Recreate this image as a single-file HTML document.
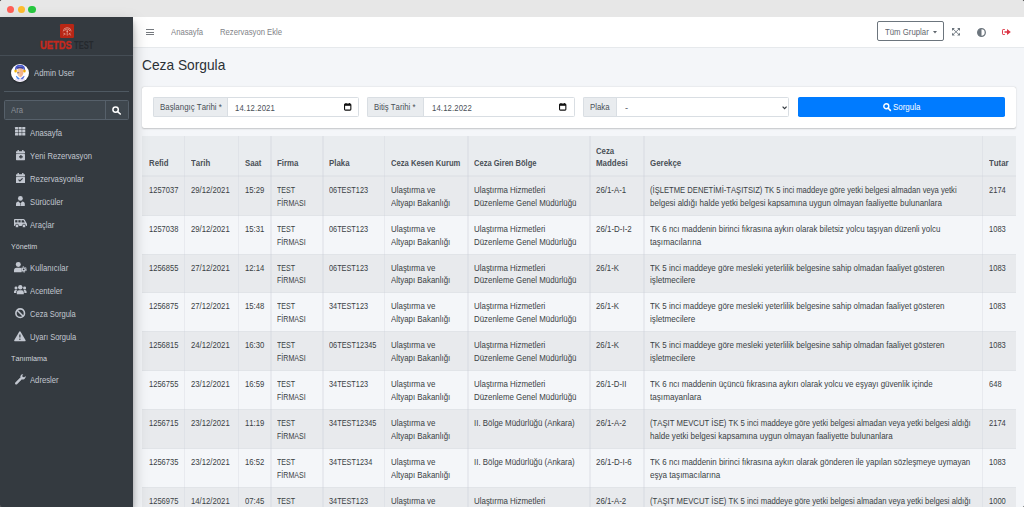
<!DOCTYPE html><html><head><meta charset="utf-8"><style>
*{margin:0;padding:0;box-sizing:border-box}
html,body{width:1024px;height:507px;overflow:hidden;background:#262626;font-family:"Liberation Sans", sans-serif}
.win{position:absolute;left:0;top:0;width:1024px;height:507px;overflow:hidden;background:#f4f6f9;border-radius:2.6px}
.ab{position:absolute}
.t{position:absolute;white-space:nowrap;transform-origin:0 0;font-kerning:none}
svg{position:absolute;overflow:visible}

</style></head><body><div class="win">
<div class="ab" style="left:0;top:0;width:1024px;height:17px;background:#e7e7e7"></div>
<div class="ab" style="left:7.050000000000001px;top:5.6px;width:7.2px;height:7.2px;border-radius:50%;background:#ff5f57"></div>
<div class="ab" style="left:17.7px;top:5.6px;width:7.2px;height:7.2px;border-radius:50%;background:#febc2e"></div>
<div class="ab" style="left:28.4px;top:5.6px;width:7.2px;height:7.2px;border-radius:50%;background:#28c840"></div>
<div class="ab" style="left:133px;top:17px;width:891px;height:490px;background:#f4f6f9"></div>
<div class="ab" style="left:133px;top:17px;width:891px;height:30.9px;background:#fff;border-bottom:0.6px solid #e6e9ec"></div>
<div class="ab" style="left:142.2px;top:136.2px;width:874.0px;height:39.70000000000002px;background:#e9ecef"></div>
<div class="ab" style="left:142.2px;top:175.90px;width:874.0px;height:38.86px;background:#e8eaed"></div>
<div class="ab" style="left:142.2px;top:175.90px;width:874.0px;height:0.6px;background:#e1e4e8"></div>
<div class="ab" style="left:142.2px;top:214.76px;width:874.0px;height:38.86px;background:#f4f6f9"></div>
<div class="ab" style="left:142.2px;top:214.76px;width:874.0px;height:0.6px;background:#e1e4e8"></div>
<div class="ab" style="left:142.2px;top:253.62px;width:874.0px;height:38.86px;background:#e8eaed"></div>
<div class="ab" style="left:142.2px;top:253.62px;width:874.0px;height:0.6px;background:#e1e4e8"></div>
<div class="ab" style="left:142.2px;top:292.48px;width:874.0px;height:38.86px;background:#f4f6f9"></div>
<div class="ab" style="left:142.2px;top:292.48px;width:874.0px;height:0.6px;background:#e1e4e8"></div>
<div class="ab" style="left:142.2px;top:331.34px;width:874.0px;height:38.86px;background:#e8eaed"></div>
<div class="ab" style="left:142.2px;top:331.34px;width:874.0px;height:0.6px;background:#e1e4e8"></div>
<div class="ab" style="left:142.2px;top:370.20px;width:874.0px;height:38.86px;background:#f4f6f9"></div>
<div class="ab" style="left:142.2px;top:370.20px;width:874.0px;height:0.6px;background:#e1e4e8"></div>
<div class="ab" style="left:142.2px;top:409.06px;width:874.0px;height:38.86px;background:#e8eaed"></div>
<div class="ab" style="left:142.2px;top:409.06px;width:874.0px;height:0.6px;background:#e1e4e8"></div>
<div class="ab" style="left:142.2px;top:447.92px;width:874.0px;height:38.86px;background:#f4f6f9"></div>
<div class="ab" style="left:142.2px;top:447.92px;width:874.0px;height:0.6px;background:#e1e4e8"></div>
<div class="ab" style="left:142.2px;top:486.78px;width:874.0px;height:38.86px;background:#e8eaed"></div>
<div class="ab" style="left:142.2px;top:486.78px;width:874.0px;height:0.6px;background:#e1e4e8"></div>
<div class="ab" style="left:142.2px;top:174.9px;width:874.0px;height:1px;background:#e2e5e9"></div>
<div class="ab" style="left:183.80px;top:136.2px;width:1.6px;height:370.8px;background:rgba(200,206,214,0.28)"></div>
<div class="ab" style="left:237.60px;top:136.2px;width:1.6px;height:370.8px;background:rgba(200,206,214,0.28)"></div>
<div class="ab" style="left:270.10px;top:136.2px;width:1.6px;height:370.8px;background:rgba(200,206,214,0.28)"></div>
<div class="ab" style="left:322.00px;top:136.2px;width:1.6px;height:370.8px;background:rgba(200,206,214,0.28)"></div>
<div class="ab" style="left:383.50px;top:136.2px;width:1.6px;height:370.8px;background:rgba(200,206,214,0.28)"></div>
<div class="ab" style="left:467.00px;top:136.2px;width:1.6px;height:370.8px;background:rgba(200,206,214,0.28)"></div>
<div class="ab" style="left:589.20px;top:136.2px;width:1.6px;height:370.8px;background:rgba(200,206,214,0.28)"></div>
<div class="ab" style="left:643.40px;top:136.2px;width:1.6px;height:370.8px;background:rgba(200,206,214,0.28)"></div>
<div class="ab" style="left:981.60px;top:136.2px;width:1.6px;height:370.8px;background:rgba(200,206,214,0.28)"></div>
<div class="t" style="left:148.70px;top:157.38px;font-size:9.0px;line-height:12.8px;color:#495057;font-weight:bold;transform:scaleX(0.8672)">Refid</div>
<div class="t" style="left:190.80px;top:157.38px;font-size:9.0px;line-height:12.8px;color:#495057;font-weight:bold;transform:scaleX(0.8724)">Tarih</div>
<div class="t" style="left:244.60px;top:157.38px;font-size:9.0px;line-height:12.8px;color:#495057;font-weight:bold;transform:scaleX(0.8637)">Saat</div>
<div class="t" style="left:277.10px;top:157.38px;font-size:9.0px;line-height:12.8px;color:#495057;font-weight:bold;transform:scaleX(0.8758)">Firma</div>
<div class="t" style="left:329.00px;top:157.38px;font-size:9.0px;line-height:12.8px;color:#495057;font-weight:bold;transform:scaleX(0.8717)">Plaka</div>
<div class="t" style="left:390.50px;top:157.38px;font-size:9.0px;line-height:12.8px;color:#495057;font-weight:bold;transform:scaleX(0.8459)">Ceza Kesen Kurum</div>
<div class="t" style="left:474.00px;top:157.38px;font-size:9.0px;line-height:12.8px;color:#495057;font-weight:bold;transform:scaleX(0.8390)">Ceza Giren Bölge</div>
<div class="t" style="left:596.20px;top:144.58px;font-size:9.0px;line-height:12.8px;color:#495057;font-weight:bold;transform:scaleX(0.8645)">Ceza</div>
<div class="t" style="left:596.20px;top:157.38px;font-size:9.0px;line-height:12.8px;color:#495057;font-weight:bold;transform:scaleX(0.8779)">Maddesi</div>
<div class="t" style="left:650.40px;top:157.38px;font-size:9.0px;line-height:12.8px;color:#495057;font-weight:bold;transform:scaleX(0.8794)">Gerekçe</div>
<div class="t" style="left:988.60px;top:157.38px;font-size:9.0px;line-height:12.8px;color:#495057;font-weight:bold;transform:scaleX(0.8731)">Tutar</div>
<div class="t" style="left:148.70px;top:183.88px;font-size:9.0px;line-height:12.8px;color:#3a3f44;transform:scaleX(0.8372)">1257037</div>
<div class="t" style="left:190.80px;top:183.88px;font-size:9.0px;line-height:12.8px;color:#3a3f44;transform:scaleX(0.8587)">29/12/2021</div>
<div class="t" style="left:244.60px;top:183.88px;font-size:9.0px;line-height:12.8px;color:#3a3f44;transform:scaleX(0.8587)">15:29</div>
<div class="t" style="left:277.10px;top:183.88px;font-size:9.0px;line-height:12.8px;color:#3a3f44;transform:scaleX(0.7870)">TEST</div>
<div class="t" style="left:277.10px;top:196.68px;font-size:9.0px;line-height:12.8px;color:#3a3f44;transform:scaleX(0.7870)">FİRMASI</div>
<div class="t" style="left:329.00px;top:183.88px;font-size:9.0px;line-height:12.8px;color:#3a3f44;transform:scaleX(0.8132)">06TEST123</div>
<div class="t" style="left:390.50px;top:183.88px;font-size:9.0px;line-height:12.8px;color:#3a3f44;transform:scaleX(0.8797)">Ulaştırma ve</div>
<div class="t" style="left:390.50px;top:196.68px;font-size:9.0px;line-height:12.8px;color:#3a3f44;transform:scaleX(0.8766)">Altyapı Bakanlığı</div>
<div class="t" style="left:474.00px;top:183.88px;font-size:9.0px;line-height:12.8px;color:#3a3f44;transform:scaleX(0.8800)">Ulaştırma Hizmetleri</div>
<div class="t" style="left:474.00px;top:196.68px;font-size:9.0px;line-height:12.8px;color:#3a3f44;transform:scaleX(0.8752)">Düzenleme Genel Müdürlüğü</div>
<div class="t" style="left:596.20px;top:183.88px;font-size:9.0px;line-height:12.8px;color:#3a3f44;transform:scaleX(0.8761)">26/1-A-1</div>
<div class="t" style="left:650.40px;top:183.88px;font-size:9.0px;line-height:12.8px;color:#3a3f44;transform:scaleX(0.8478)">(İŞLETME DENETİMİ-TAŞITSIZ) TK 5 inci maddeye göre yetki belgesi almadan veya yetki</div>
<div class="t" style="left:650.40px;top:196.68px;font-size:9.0px;line-height:12.8px;color:#3a3f44;transform:scaleX(0.8908)">belgesi aldığı halde yetki belgesi kapsamına uygun olmayan faaliyette bulunanlara</div>
<div class="t" style="left:988.60px;top:183.88px;font-size:9.0px;line-height:12.8px;color:#3a3f44;transform:scaleX(0.8372)">2174</div>
<div class="t" style="left:148.70px;top:222.74px;font-size:9.0px;line-height:12.8px;color:#3a3f44;transform:scaleX(0.8372)">1257038</div>
<div class="t" style="left:190.80px;top:222.74px;font-size:9.0px;line-height:12.8px;color:#3a3f44;transform:scaleX(0.8587)">29/12/2021</div>
<div class="t" style="left:244.60px;top:222.74px;font-size:9.0px;line-height:12.8px;color:#3a3f44;transform:scaleX(0.8587)">15:31</div>
<div class="t" style="left:277.10px;top:222.74px;font-size:9.0px;line-height:12.8px;color:#3a3f44;transform:scaleX(0.7870)">TEST</div>
<div class="t" style="left:277.10px;top:235.54px;font-size:9.0px;line-height:12.8px;color:#3a3f44;transform:scaleX(0.7870)">FİRMASI</div>
<div class="t" style="left:329.00px;top:222.74px;font-size:9.0px;line-height:12.8px;color:#3a3f44;transform:scaleX(0.8132)">06TEST123</div>
<div class="t" style="left:390.50px;top:222.74px;font-size:9.0px;line-height:12.8px;color:#3a3f44;transform:scaleX(0.8797)">Ulaştırma ve</div>
<div class="t" style="left:390.50px;top:235.54px;font-size:9.0px;line-height:12.8px;color:#3a3f44;transform:scaleX(0.8766)">Altyapı Bakanlığı</div>
<div class="t" style="left:474.00px;top:222.74px;font-size:9.0px;line-height:12.8px;color:#3a3f44;transform:scaleX(0.8800)">Ulaştırma Hizmetleri</div>
<div class="t" style="left:474.00px;top:235.54px;font-size:9.0px;line-height:12.8px;color:#3a3f44;transform:scaleX(0.8752)">Düzenleme Genel Müdürlüğü</div>
<div class="t" style="left:596.20px;top:222.74px;font-size:9.0px;line-height:12.8px;color:#3a3f44;transform:scaleX(0.8809)">26/1-D-I-2</div>
<div class="t" style="left:650.40px;top:222.74px;font-size:9.0px;line-height:12.8px;color:#3a3f44;transform:scaleX(0.8807)">TK 6 ncı maddenin birinci fıkrasına aykırı olarak biletsiz yolcu taşıyan düzenli yolcu</div>
<div class="t" style="left:650.40px;top:235.54px;font-size:9.0px;line-height:12.8px;color:#3a3f44;transform:scaleX(0.9058)">taşımacılarına</div>
<div class="t" style="left:988.60px;top:222.74px;font-size:9.0px;line-height:12.8px;color:#3a3f44;transform:scaleX(0.8372)">1083</div>
<div class="t" style="left:148.70px;top:261.60px;font-size:9.0px;line-height:12.8px;color:#3a3f44;transform:scaleX(0.8372)">1256855</div>
<div class="t" style="left:190.80px;top:261.60px;font-size:9.0px;line-height:12.8px;color:#3a3f44;transform:scaleX(0.8587)">27/12/2021</div>
<div class="t" style="left:244.60px;top:261.60px;font-size:9.0px;line-height:12.8px;color:#3a3f44;transform:scaleX(0.8587)">12:14</div>
<div class="t" style="left:277.10px;top:261.60px;font-size:9.0px;line-height:12.8px;color:#3a3f44;transform:scaleX(0.7870)">TEST</div>
<div class="t" style="left:277.10px;top:274.40px;font-size:9.0px;line-height:12.8px;color:#3a3f44;transform:scaleX(0.7870)">FİRMASI</div>
<div class="t" style="left:329.00px;top:261.60px;font-size:9.0px;line-height:12.8px;color:#3a3f44;transform:scaleX(0.8132)">06TEST123</div>
<div class="t" style="left:390.50px;top:261.60px;font-size:9.0px;line-height:12.8px;color:#3a3f44;transform:scaleX(0.8797)">Ulaştırma ve</div>
<div class="t" style="left:390.50px;top:274.40px;font-size:9.0px;line-height:12.8px;color:#3a3f44;transform:scaleX(0.8766)">Altyapı Bakanlığı</div>
<div class="t" style="left:474.00px;top:261.60px;font-size:9.0px;line-height:12.8px;color:#3a3f44;transform:scaleX(0.8800)">Ulaştırma Hizmetleri</div>
<div class="t" style="left:474.00px;top:274.40px;font-size:9.0px;line-height:12.8px;color:#3a3f44;transform:scaleX(0.8752)">Düzenleme Genel Müdürlüğü</div>
<div class="t" style="left:596.20px;top:261.60px;font-size:9.0px;line-height:12.8px;color:#3a3f44;transform:scaleX(0.8660)">26/1-K</div>
<div class="t" style="left:650.40px;top:261.60px;font-size:9.0px;line-height:12.8px;color:#3a3f44;transform:scaleX(0.8827)">TK 5 inci maddeye göre mesleki yeterlilik belgesine sahip olmadan faaliyet gösteren</div>
<div class="t" style="left:650.40px;top:274.40px;font-size:9.0px;line-height:12.8px;color:#3a3f44;transform:scaleX(0.9058)">işletmecilere</div>
<div class="t" style="left:988.60px;top:261.60px;font-size:9.0px;line-height:12.8px;color:#3a3f44;transform:scaleX(0.8372)">1083</div>
<div class="t" style="left:148.70px;top:300.46px;font-size:9.0px;line-height:12.8px;color:#3a3f44;transform:scaleX(0.8372)">1256875</div>
<div class="t" style="left:190.80px;top:300.46px;font-size:9.0px;line-height:12.8px;color:#3a3f44;transform:scaleX(0.8587)">27/12/2021</div>
<div class="t" style="left:244.60px;top:300.46px;font-size:9.0px;line-height:12.8px;color:#3a3f44;transform:scaleX(0.8587)">15:48</div>
<div class="t" style="left:277.10px;top:300.46px;font-size:9.0px;line-height:12.8px;color:#3a3f44;transform:scaleX(0.7870)">TEST</div>
<div class="t" style="left:277.10px;top:313.26px;font-size:9.0px;line-height:12.8px;color:#3a3f44;transform:scaleX(0.7870)">FİRMASI</div>
<div class="t" style="left:329.00px;top:300.46px;font-size:9.0px;line-height:12.8px;color:#3a3f44;transform:scaleX(0.8132)">34TEST123</div>
<div class="t" style="left:390.50px;top:300.46px;font-size:9.0px;line-height:12.8px;color:#3a3f44;transform:scaleX(0.8797)">Ulaştırma ve</div>
<div class="t" style="left:390.50px;top:313.26px;font-size:9.0px;line-height:12.8px;color:#3a3f44;transform:scaleX(0.8766)">Altyapı Bakanlığı</div>
<div class="t" style="left:474.00px;top:300.46px;font-size:9.0px;line-height:12.8px;color:#3a3f44;transform:scaleX(0.8800)">Ulaştırma Hizmetleri</div>
<div class="t" style="left:474.00px;top:313.26px;font-size:9.0px;line-height:12.8px;color:#3a3f44;transform:scaleX(0.8752)">Düzenleme Genel Müdürlüğü</div>
<div class="t" style="left:596.20px;top:300.46px;font-size:9.0px;line-height:12.8px;color:#3a3f44;transform:scaleX(0.8660)">26/1-K</div>
<div class="t" style="left:650.40px;top:300.46px;font-size:9.0px;line-height:12.8px;color:#3a3f44;transform:scaleX(0.8827)">TK 5 inci maddeye göre mesleki yeterlilik belgesine sahip olmadan faaliyet gösteren</div>
<div class="t" style="left:650.40px;top:313.26px;font-size:9.0px;line-height:12.8px;color:#3a3f44;transform:scaleX(0.9058)">işletmecilere</div>
<div class="t" style="left:988.60px;top:300.46px;font-size:9.0px;line-height:12.8px;color:#3a3f44;transform:scaleX(0.8372)">1083</div>
<div class="t" style="left:148.70px;top:339.32px;font-size:9.0px;line-height:12.8px;color:#3a3f44;transform:scaleX(0.8372)">1256815</div>
<div class="t" style="left:190.80px;top:339.32px;font-size:9.0px;line-height:12.8px;color:#3a3f44;transform:scaleX(0.8587)">24/12/2021</div>
<div class="t" style="left:244.60px;top:339.32px;font-size:9.0px;line-height:12.8px;color:#3a3f44;transform:scaleX(0.8587)">16:30</div>
<div class="t" style="left:277.10px;top:339.32px;font-size:9.0px;line-height:12.8px;color:#3a3f44;transform:scaleX(0.7870)">TEST</div>
<div class="t" style="left:277.10px;top:352.12px;font-size:9.0px;line-height:12.8px;color:#3a3f44;transform:scaleX(0.7870)">FİRMASI</div>
<div class="t" style="left:329.00px;top:339.32px;font-size:9.0px;line-height:12.8px;color:#3a3f44;transform:scaleX(0.8173)">06TEST12345</div>
<div class="t" style="left:390.50px;top:339.32px;font-size:9.0px;line-height:12.8px;color:#3a3f44;transform:scaleX(0.8797)">Ulaştırma ve</div>
<div class="t" style="left:390.50px;top:352.12px;font-size:9.0px;line-height:12.8px;color:#3a3f44;transform:scaleX(0.8766)">Altyapı Bakanlığı</div>
<div class="t" style="left:474.00px;top:339.32px;font-size:9.0px;line-height:12.8px;color:#3a3f44;transform:scaleX(0.8800)">Ulaştırma Hizmetleri</div>
<div class="t" style="left:474.00px;top:352.12px;font-size:9.0px;line-height:12.8px;color:#3a3f44;transform:scaleX(0.8752)">Düzenleme Genel Müdürlüğü</div>
<div class="t" style="left:596.20px;top:339.32px;font-size:9.0px;line-height:12.8px;color:#3a3f44;transform:scaleX(0.8660)">26/1-K</div>
<div class="t" style="left:650.40px;top:339.32px;font-size:9.0px;line-height:12.8px;color:#3a3f44;transform:scaleX(0.8827)">TK 5 inci maddeye göre mesleki yeterlilik belgesine sahip olmadan faaliyet gösteren</div>
<div class="t" style="left:650.40px;top:352.12px;font-size:9.0px;line-height:12.8px;color:#3a3f44;transform:scaleX(0.9058)">işletmecilere</div>
<div class="t" style="left:988.60px;top:339.32px;font-size:9.0px;line-height:12.8px;color:#3a3f44;transform:scaleX(0.8372)">1083</div>
<div class="t" style="left:148.70px;top:378.18px;font-size:9.0px;line-height:12.8px;color:#3a3f44;transform:scaleX(0.8372)">1256755</div>
<div class="t" style="left:190.80px;top:378.18px;font-size:9.0px;line-height:12.8px;color:#3a3f44;transform:scaleX(0.8587)">23/12/2021</div>
<div class="t" style="left:244.60px;top:378.18px;font-size:9.0px;line-height:12.8px;color:#3a3f44;transform:scaleX(0.8587)">16:59</div>
<div class="t" style="left:277.10px;top:378.18px;font-size:9.0px;line-height:12.8px;color:#3a3f44;transform:scaleX(0.7870)">TEST</div>
<div class="t" style="left:277.10px;top:390.98px;font-size:9.0px;line-height:12.8px;color:#3a3f44;transform:scaleX(0.7870)">FİRMASI</div>
<div class="t" style="left:329.00px;top:378.18px;font-size:9.0px;line-height:12.8px;color:#3a3f44;transform:scaleX(0.8132)">34TEST123</div>
<div class="t" style="left:390.50px;top:378.18px;font-size:9.0px;line-height:12.8px;color:#3a3f44;transform:scaleX(0.8797)">Ulaştırma ve</div>
<div class="t" style="left:390.50px;top:390.98px;font-size:9.0px;line-height:12.8px;color:#3a3f44;transform:scaleX(0.8766)">Altyapı Bakanlığı</div>
<div class="t" style="left:474.00px;top:378.18px;font-size:9.0px;line-height:12.8px;color:#3a3f44;transform:scaleX(0.8800)">Ulaştırma Hizmetleri</div>
<div class="t" style="left:474.00px;top:390.98px;font-size:9.0px;line-height:12.8px;color:#3a3f44;transform:scaleX(0.8752)">Düzenleme Genel Müdürlüğü</div>
<div class="t" style="left:596.20px;top:378.18px;font-size:9.0px;line-height:12.8px;color:#3a3f44;transform:scaleX(0.8677)">26/1-D-II</div>
<div class="t" style="left:650.40px;top:378.18px;font-size:9.0px;line-height:12.8px;color:#3a3f44;transform:scaleX(0.8801)">TK 6 ncı maddenin üçüncü fıkrasına aykırı olarak yolcu ve eşyayı güvenlik içinde</div>
<div class="t" style="left:650.40px;top:390.98px;font-size:9.0px;line-height:12.8px;color:#3a3f44;transform:scaleX(0.9058)">taşımayanlara</div>
<div class="t" style="left:988.60px;top:378.18px;font-size:9.0px;line-height:12.8px;color:#3a3f44;transform:scaleX(0.8372)">648</div>
<div class="t" style="left:148.70px;top:417.04px;font-size:9.0px;line-height:12.8px;color:#3a3f44;transform:scaleX(0.8372)">1256715</div>
<div class="t" style="left:190.80px;top:417.04px;font-size:9.0px;line-height:12.8px;color:#3a3f44;transform:scaleX(0.8587)">23/12/2021</div>
<div class="t" style="left:244.60px;top:417.04px;font-size:9.0px;line-height:12.8px;color:#3a3f44;transform:scaleX(0.8587)">11:19</div>
<div class="t" style="left:277.10px;top:417.04px;font-size:9.0px;line-height:12.8px;color:#3a3f44;transform:scaleX(0.7870)">TEST</div>
<div class="t" style="left:277.10px;top:429.84px;font-size:9.0px;line-height:12.8px;color:#3a3f44;transform:scaleX(0.7870)">FİRMASI</div>
<div class="t" style="left:329.00px;top:417.04px;font-size:9.0px;line-height:12.8px;color:#3a3f44;transform:scaleX(0.8173)">34TEST12345</div>
<div class="t" style="left:390.50px;top:417.04px;font-size:9.0px;line-height:12.8px;color:#3a3f44;transform:scaleX(0.8797)">Ulaştırma ve</div>
<div class="t" style="left:390.50px;top:429.84px;font-size:9.0px;line-height:12.8px;color:#3a3f44;transform:scaleX(0.8766)">Altyapı Bakanlığı</div>
<div class="t" style="left:474.00px;top:417.04px;font-size:9.0px;line-height:12.8px;color:#3a3f44;transform:scaleX(0.8755)">II. Bölge Müdürlüğü (Ankara)</div>
<div class="t" style="left:596.20px;top:417.04px;font-size:9.0px;line-height:12.8px;color:#3a3f44;transform:scaleX(0.8761)">26/1-A-2</div>
<div class="t" style="left:650.40px;top:417.04px;font-size:9.0px;line-height:12.8px;color:#3a3f44;transform:scaleX(0.8580)">(TAŞIT MEVCUT İSE) TK 5 inci maddeye göre yetki belgesi almadan veya yetki belgesi aldığı</div>
<div class="t" style="left:650.40px;top:429.84px;font-size:9.0px;line-height:12.8px;color:#3a3f44;transform:scaleX(0.8918)">halde yetki belgesi kapsamına uygun olmayan faaliyette bulunanlara</div>
<div class="t" style="left:988.60px;top:417.04px;font-size:9.0px;line-height:12.8px;color:#3a3f44;transform:scaleX(0.8372)">2174</div>
<div class="t" style="left:148.70px;top:455.90px;font-size:9.0px;line-height:12.8px;color:#3a3f44;transform:scaleX(0.8372)">1256735</div>
<div class="t" style="left:190.80px;top:455.90px;font-size:9.0px;line-height:12.8px;color:#3a3f44;transform:scaleX(0.8587)">23/12/2021</div>
<div class="t" style="left:244.60px;top:455.90px;font-size:9.0px;line-height:12.8px;color:#3a3f44;transform:scaleX(0.8587)">16:52</div>
<div class="t" style="left:277.10px;top:455.90px;font-size:9.0px;line-height:12.8px;color:#3a3f44;transform:scaleX(0.7870)">TEST</div>
<div class="t" style="left:277.10px;top:468.70px;font-size:9.0px;line-height:12.8px;color:#3a3f44;transform:scaleX(0.7870)">FİRMASI</div>
<div class="t" style="left:329.00px;top:455.90px;font-size:9.0px;line-height:12.8px;color:#3a3f44;transform:scaleX(0.8154)">34TEST1234</div>
<div class="t" style="left:390.50px;top:455.90px;font-size:9.0px;line-height:12.8px;color:#3a3f44;transform:scaleX(0.8797)">Ulaştırma ve</div>
<div class="t" style="left:390.50px;top:468.70px;font-size:9.0px;line-height:12.8px;color:#3a3f44;transform:scaleX(0.8766)">Altyapı Bakanlığı</div>
<div class="t" style="left:474.00px;top:455.90px;font-size:9.0px;line-height:12.8px;color:#3a3f44;transform:scaleX(0.8755)">II. Bölge Müdürlüğü (Ankara)</div>
<div class="t" style="left:596.20px;top:455.90px;font-size:9.0px;line-height:12.8px;color:#3a3f44;transform:scaleX(0.8809)">26/1-D-I-6</div>
<div class="t" style="left:650.40px;top:455.90px;font-size:9.0px;line-height:12.8px;color:#3a3f44;transform:scaleX(0.8830)">TK 6 ncı maddenin birinci fıkrasına aykırı olarak gönderen ile yapılan sözleşmeye uymayan</div>
<div class="t" style="left:650.40px;top:468.70px;font-size:9.0px;line-height:12.8px;color:#3a3f44;transform:scaleX(0.8988)">eşya taşımacılarına</div>
<div class="t" style="left:988.60px;top:455.90px;font-size:9.0px;line-height:12.8px;color:#3a3f44;transform:scaleX(0.8372)">1083</div>
<div class="t" style="left:148.70px;top:494.76px;font-size:9.0px;line-height:12.8px;color:#3a3f44;transform:scaleX(0.8372)">1256975</div>
<div class="t" style="left:190.80px;top:494.76px;font-size:9.0px;line-height:12.8px;color:#3a3f44;transform:scaleX(0.8587)">14/12/2021</div>
<div class="t" style="left:244.60px;top:494.76px;font-size:9.0px;line-height:12.8px;color:#3a3f44;transform:scaleX(0.8587)">07:45</div>
<div class="t" style="left:277.10px;top:494.76px;font-size:9.0px;line-height:12.8px;color:#3a3f44;transform:scaleX(0.7870)">TEST</div>
<div class="t" style="left:277.10px;top:507.56px;font-size:9.0px;line-height:12.8px;color:#3a3f44;transform:scaleX(0.7870)">FİRMASI</div>
<div class="t" style="left:329.00px;top:494.76px;font-size:9.0px;line-height:12.8px;color:#3a3f44;transform:scaleX(0.8132)">34TEST123</div>
<div class="t" style="left:390.50px;top:494.76px;font-size:9.0px;line-height:12.8px;color:#3a3f44;transform:scaleX(0.8797)">Ulaştırma ve</div>
<div class="t" style="left:390.50px;top:507.56px;font-size:9.0px;line-height:12.8px;color:#3a3f44;transform:scaleX(0.8766)">Altyapı Bakanlığı</div>
<div class="t" style="left:474.00px;top:494.76px;font-size:9.0px;line-height:12.8px;color:#3a3f44;transform:scaleX(0.8800)">Ulaştırma Hizmetleri</div>
<div class="t" style="left:474.00px;top:507.56px;font-size:9.0px;line-height:12.8px;color:#3a3f44;transform:scaleX(0.8752)">Düzenleme Genel Müdürlüğü</div>
<div class="t" style="left:596.20px;top:494.76px;font-size:9.0px;line-height:12.8px;color:#3a3f44;transform:scaleX(0.8761)">26/1-A-2</div>
<div class="t" style="left:650.40px;top:494.76px;font-size:9.0px;line-height:12.8px;color:#3a3f44;transform:scaleX(0.8580)">(TAŞIT MEVCUT İSE) TK 5 inci maddeye göre yetki belgesi almadan veya yetki belgesi aldığı</div>
<div class="t" style="left:650.40px;top:507.56px;font-size:9.0px;line-height:12.8px;color:#3a3f44;transform:scaleX(0.8918)">halde yetki belgesi kapsamına uygun olmayan faaliyette bulunanlara</div>
<div class="t" style="left:988.60px;top:494.76px;font-size:9.0px;line-height:12.8px;color:#3a3f44;transform:scaleX(0.8372)">1000</div>
<div class="ab" style="left:0;top:17px;width:133.3px;height:490px;background:#343a40;box-shadow:0 7px 15px rgba(0,0,0,.25),0 5px 5px rgba(0,0,0,.22)"></div>
<div class="ab" style="left:60px;top:24px;width:14px;height:14px;background:#b82615;border-radius:1.2px"></div>
<svg style="left:60px;top:23px" width="14" height="14" viewBox="0 0 14 14"><g fill="none" stroke="#e3a094" stroke-width="0.8"><path d="M3.2 8.4 Q3.6 4.6 7.2 4.6 Q10.8 4.6 11.2 8.4"/><path d="M4.6 8 Q5 6 7.2 6 Q9.4 6 9.8 8"/><path d="M3.4 9.8 L5.2 11.6 M10.4 9.8 L8.8 11.6 M7.2 9.2 V12.6 M5 10.2 L3.6 12.4 M9.4 10.2 L10.6 12.4"/></g><path d="M7.2 7 L8.2 8.2 L7.2 9.4 L6.2 8.2 Z" fill="#e9a79c"/></svg>
<div class="t" style="left:40.00px;top:40.57px;font-size:10.2px;line-height:10px;color:#c6281c;font-weight:bold;transform:scaleX(0.9200);-webkit-text-stroke:0.35px #c6281c">UETDS</div>
<div class="t" style="left:74.40px;top:40.57px;font-size:10.2px;line-height:10px;color:#25292e;font-weight:bold;transform:scaleX(0.7500)">TEST</div>
<div class="ab" style="left:0;top:54.8px;width:133.3px;height:0.8px;background:#454d55"></div>
<div class="ab" style="left:11px;top:64px;width:18px;height:18px;border-radius:50%;background:#fff;box-shadow:0 1px 2px rgba(0,0,0,.4)"></div>
<svg style="left:11px;top:64px" width="18" height="18" viewBox="0 0 18 18"><defs><clipPath id="av"><circle cx="9" cy="9" r="8.6"/></clipPath></defs><g clip-path="url(#av)"><path d="M4.2 15 Q9 12.5 13.8 15 L14 18 H4 Z" fill="#e6e0f5"/><path d="M6.2 9.5 Q6 3.2 9 3 Q12.3 3.2 12.2 9.5 Q11.6 12.6 9.2 13.2 Q6.8 12.6 6.2 9.5 Z" fill="#f7c8a2"/><path d="M9 3 Q12.3 3.2 12.2 9.5 Q11.6 12.6 9.2 13.2 Z" fill="#f3b48e"/><path d="M3.8 7 Q3.6 0.6 9 0.6 Q14.4 0.6 14.3 7 L12.6 6.6 Q12.6 2.6 9 2.6 Q5.4 2.6 5.4 6.6 Z" fill="#4a5bd0"/><path d="M5.6 3.4 Q9 1.4 12.4 3.4 L12 5 Q9 3.4 6 5 Z" fill="#3b3f9a"/><ellipse cx="4.6" cy="6.9" rx="1.3" ry="1.5" fill="#f5b800"/><ellipse cx="13.4" cy="6.9" rx="1.3" ry="1.5" fill="#f5a800"/><rect x="6" y="8.2" width="2.4" height="1.1" rx="0.5" fill="#6b6f8a"/><path d="M5.3 11.8 L8.6 14.4 L7.4 15.4 Q5.4 14.6 5 12.6 Z" fill="#4d8ef0"/><path d="M13.1 11.8 L9.8 14.4 L11 15.4 Q13 14.6 13.4 12.6 Z" fill="#5a6fe0"/></g></svg>
<div class="t" style="left:34.30px;top:67.28px;font-size:9.0px;line-height:12.8px;color:#c2c7d0;transform:scaleX(0.8626)">Admin User</div>
<div class="ab" style="left:4px;top:90.6px;width:125px;height:0.6px;background:#4f5962"></div>
<div class="ab" style="left:4px;top:100px;width:125px;height:20px;background:#3f474e;border:0.6px solid #56606a;border-radius:1.5px"></div>
<div class="ab" style="left:104.6px;top:100px;width:0.6px;height:20px;background:#56606a"></div>
<div class="t" style="left:11.00px;top:104.18px;font-size:9.0px;line-height:12.8px;color:#8a9097;transform:scaleX(0.8549)">Ara</div>
<svg style="left:112px;top:106px" width="10" height="8" viewBox="0 0 10 8"><circle cx="3.6" cy="3.6" r="2.7" fill="none" stroke="#fff" stroke-width="1.5"/><path d="M5.6 5.6 L8.3 8" stroke="#fff" stroke-width="1.6" stroke-linecap="round"/></svg>
<svg style="left:14.8px;top:127.4px" width="10.5" height="8.7" viewBox="0 0 10.5 8.7"><rect x="0.0" y="0.0" width="3.1" height="2.6" rx="0.5" fill="#c2c7d0"/><rect x="0.0" y="3.0" width="3.1" height="2.6" rx="0.5" fill="#c2c7d0"/><rect x="0.0" y="6.0" width="3.1" height="2.6" rx="0.5" fill="#c2c7d0"/><rect x="3.6" y="0.0" width="3.1" height="2.6" rx="0.5" fill="#c2c7d0"/><rect x="3.6" y="3.0" width="3.1" height="2.6" rx="0.5" fill="#c2c7d0"/><rect x="3.6" y="6.0" width="3.1" height="2.6" rx="0.5" fill="#c2c7d0"/><rect x="7.2" y="0.0" width="3.1" height="2.6" rx="0.5" fill="#c2c7d0"/><rect x="7.2" y="3.0" width="3.1" height="2.6" rx="0.5" fill="#c2c7d0"/><rect x="7.2" y="6.0" width="3.1" height="2.6" rx="0.5" fill="#c2c7d0"/></svg>
<div class="t" style="left:30.30px;top:126.78px;font-size:9.0px;line-height:12.8px;color:#c2c7d0;transform:scaleX(0.8557)">Anasayfa</div>
<svg style="left:15.6px;top:149.7px" width="9" height="10.2" viewBox="0 0 9 10.2"><rect x="1.5" y="0" width="1.4" height="2" fill="#c2c7d0"/><rect x="6.1" y="0" width="1.4" height="2" fill="#c2c7d0"/><rect x="0" y="1.2" width="9" height="2.2" rx="0.6" fill="#c2c7d0"/><rect x="0" y="3.9" width="9" height="6.3" rx="0.6" fill="#c2c7d0"/><path d="M4.9 5.0 V8.6 M3.0 6.8 H6.8" stroke="#343a40" stroke-width="1.25"/></svg>
<div class="t" style="left:30.30px;top:149.83px;font-size:9.0px;line-height:12.8px;color:#c2c7d0;transform:scaleX(0.8472)">Yeni Rezervasyon</div>
<svg style="left:15.8px;top:172.5px" width="9" height="10" viewBox="0 0 9 10"><rect x="1.5" y="0" width="1.4" height="2" fill="#c2c7d0"/><rect x="6.1" y="0" width="1.4" height="2" fill="#c2c7d0"/><rect x="0" y="1.2" width="9" height="2.2" rx="0.6" fill="#c2c7d0"/><rect x="0" y="3.9" width="9" height="6.1" rx="0.6" fill="#c2c7d0"/><path d="M2.5 6.6 L3.9 8 L6.6 5.3" fill="none" stroke="#343a40" stroke-width="1.1"/></svg>
<div class="t" style="left:30.30px;top:172.88px;font-size:9.0px;line-height:12.8px;color:#c2c7d0;transform:scaleX(0.8622)">Rezervasyonlar</div>
<svg style="left:15.8px;top:196px" width="8.8" height="10" viewBox="0 0 8.8 10"><circle cx="4.4" cy="2.4" r="2.4" fill="#c2c7d0"/><path d="M0 10 V8 Q0 5.4 2.6 5.4 L4.4 7.6 L6.2 5.4 Q8.8 5.4 8.8 8 V10 Z" fill="#c2c7d0"/><path d="M4.4 6.2 L4 9.5 L4.8 9.5 Z" fill="#343a40"/></svg>
<div class="t" style="left:30.30px;top:195.93px;font-size:9.0px;line-height:12.8px;color:#c2c7d0;transform:scaleX(0.8562)">Sürücüler</div>
<svg style="left:13.6px;top:219.3px" width="13" height="8.8" viewBox="0 0 13 8.8"><path d="M0.8 0 H9.3 Q10.3 0 10.8 1 L13 4.8 V7 H0 V0.8 Q0 0 0.8 0 Z" fill="#c2c7d0"/><rect x="1.2" y="1.2" width="2.2" height="2.2" fill="#343a40"/><rect x="4.4" y="1.2" width="2.2" height="2.2" fill="#343a40"/><path d="M7.6 1.2 H9.6 L10.8 3.4 H7.6 Z" fill="#343a40"/><circle cx="3" cy="7" r="1.8" fill="#c2c7d0" stroke="#343a40" stroke-width="0.7"/><circle cx="10" cy="7" r="1.8" fill="#c2c7d0" stroke="#343a40" stroke-width="0.7"/></svg>
<div class="t" style="left:30.30px;top:218.98px;font-size:9.0px;line-height:12.8px;color:#c2c7d0;transform:scaleX(0.8499)">Araçlar</div>
<div class="t" style="left:10.60px;top:241.19px;font-size:8.1px;line-height:12.8px;color:#d0d4db;transform:scaleX(0.8842)">Yönetim</div>
<svg style="left:13.8px;top:262px" width="12.4" height="10.2" viewBox="0 0 12.4 10.2"><circle cx="4.3" cy="2.5" r="2.5" fill="#c2c7d0"/><path d="M0 10.2 V8.4 Q0 5.8 2.6 5.8 H6 Q7.2 5.8 7.6 6.4 V10.2 Z" fill="#c2c7d0"/><circle cx="9.7" cy="7.4" r="2.75" fill="none" stroke="#c2c7d0" stroke-width="0.9" stroke-dasharray="1.5 1.38"/><circle cx="9.7" cy="7.4" r="2.25" fill="#c2c7d0"/><circle cx="9.7" cy="7.4" r="0.8" fill="#343a40"/></svg>
<div class="t" style="left:30.30px;top:261.98px;font-size:9.0px;line-height:12.8px;color:#c2c7d0;transform:scaleX(0.8586)">Kullanıcılar</div>
<svg style="left:13.8px;top:285.4px" width="12.6" height="9.2" viewBox="0 0 12.6 9.2"><circle cx="6.3" cy="2.2" r="2.2" fill="#c2c7d0"/><circle cx="2" cy="3" r="1.5" fill="#c2c7d0"/><circle cx="10.6" cy="3" r="1.5" fill="#c2c7d0"/><path d="M2.8 9.2 V7.6 Q2.8 5.2 5 5.2 H7.6 Q9.8 5.2 9.8 7.6 V9.2 Z" fill="#c2c7d0"/><path d="M0 8 V6.8 Q0 5 1.6 5 H3 Q2.2 6 2.2 8 Z" fill="#c2c7d0"/><path d="M12.6 8 V6.8 Q12.6 5 11 5 H9.6 Q10.4 6 10.4 8 Z" fill="#c2c7d0"/></svg>
<div class="t" style="left:30.30px;top:285.03px;font-size:9.0px;line-height:12.8px;color:#c2c7d0;transform:scaleX(0.8560)">Acenteler</div>
<svg style="left:14.9px;top:307.9px" width="10.4" height="10.4" viewBox="0 0 10.4 10.4"><circle cx="5.2" cy="5.2" r="4.3" fill="none" stroke="#c2c7d0" stroke-width="1.6"/><path d="M2.2 2.2 L8.2 8.2" stroke="#c2c7d0" stroke-width="1.6"/></svg>
<div class="t" style="left:30.30px;top:308.08px;font-size:9.0px;line-height:12.8px;color:#c2c7d0;transform:scaleX(0.8381)">Ceza Sorgula</div>
<svg style="left:14.3px;top:330.8px" width="11.8" height="10.2" viewBox="0 0 11.8 10.2"><path d="M5.9 0.2 Q6.3 0.2 6.6 0.7 L11.6 9.2 Q11.9 10.2 11 10.2 H0.8 Q-0.1 10.2 0.2 9.2 L5.2 0.7 Q5.5 0.2 5.9 0.2 Z" fill="#c2c7d0"/><path d="M5.9 3.4 V6.6" stroke="#343a40" stroke-width="1.2"/><circle cx="5.9" cy="8.2" r="0.7" fill="#343a40"/></svg>
<div class="t" style="left:30.30px;top:331.13px;font-size:9.0px;line-height:12.8px;color:#c2c7d0;transform:scaleX(0.8385)">Uyarı Sorgula</div>
<div class="t" style="left:10.60px;top:352.79px;font-size:8.1px;line-height:12.8px;color:#d0d4db;transform:scaleX(0.8913)">Tanımlama</div>
<svg style="left:14.7px;top:373.8px" width="11" height="10.5" viewBox="0 0 11 10.5"><path d="M1.2 9.3 L5.6 4.9" stroke="#c2c7d0" stroke-width="2.4" stroke-linecap="round"/><path d="M8.3 0.3 Q5.6 0 5.3 2.7 Q5.2 4.2 6.3 5.2 Q7.8 6 9.5 4.9 Q10.9 3.8 10.8 2 L9.2 3.2 L7.6 2.9 L7.3 1.4 Z" fill="#c2c7d0"/></svg>
<div class="t" style="left:30.30px;top:373.58px;font-size:9.0px;line-height:12.8px;color:#c2c7d0;transform:scaleX(0.8535)">Adresler</div>
<div class="ab" style="left:145.8px;top:28.9px;width:8px;height:1.2px;background:#75797e"></div><div class="ab" style="left:145.8px;top:31.6px;width:8px;height:1.2px;background:#75797e"></div><div class="ab" style="left:145.8px;top:34.3px;width:8px;height:1.2px;background:#75797e"></div>
<div class="t" style="left:170.50px;top:26.38px;font-size:9.0px;line-height:12.8px;color:#7f8387;transform:scaleX(0.8557)">Anasayfa</div>
<div class="t" style="left:220.00px;top:26.38px;font-size:9.0px;line-height:12.8px;color:#7f8387;transform:scaleX(0.8558)">Rezervasyon Ekle</div>
<div class="ab" style="left:877.3px;top:21.4px;width:66.4px;height:20.1px;border:0.8px solid #6c757d;border-radius:2px"></div>
<div class="t" style="left:884.80px;top:25.58px;font-size:9.0px;line-height:12.8px;color:#5f666d;transform:scaleX(0.8656)">Tüm Gruplar</div>
<svg style="left:933px;top:31px" width="4" height="2.4" viewBox="0 0 4 2.4"><path d="M0 0 H4 L2 2.4 Z" fill="#5f666d"/></svg>
<svg style="left:952.2px;top:28.2px" width="8" height="7.6" viewBox="0 0 8 7.6"><g fill="#6c757d"><path d="M0 0 H2.9 L0 2.9 Z"/><path d="M8 0 H5.1 L8 2.9 Z"/><path d="M0 7.6 H2.9 L0 4.7 Z"/><path d="M8 7.6 H5.1 L8 4.7 Z"/></g><path d="M1 1 L7 6.6 M7 1 L1 6.6" stroke="#6c757d" stroke-width="0.9"/></svg>
<svg style="left:976.8px;top:28px" width="9" height="9" viewBox="0 0 9 9"><circle cx="4.5" cy="4.5" r="3.8" fill="none" stroke="#6c757d" stroke-width="1.3"/><path d="M4.5 0.7 A3.8 3.8 0 0 0 4.5 8.3 Z" fill="#6c757d"/></svg>
<svg style="left:1002.3px;top:29.3px" width="8.8" height="6" viewBox="0 0 8.8 6"><path d="M2.8 0.5 H1.2 Q0.5 0.5 0.5 1.2 V4.8 Q0.5 5.5 1.2 5.5 H2.8" fill="none" stroke="#dc3545" stroke-width="1"/><path d="M2.5 2.2 H5 V0 L8.8 3 L5 6 V3.8 H2.5 Z" fill="#dc3545"/></svg>
<div class="t" style="left:141.80px;top:56.58px;font-size:14.2px;line-height:17px;color:#2b3035;transform:scaleX(0.9689)">Ceza Sorgula</div>
<div class="ab" style="left:142px;top:86.9px;width:874px;height:41.3px;background:#fff;border-radius:2px;box-shadow:0 0 0.6px rgba(0,0,0,.125),0 0.6px 1.6px rgba(0,0,0,.2)"></div>
<div class="ab" style="left:152.6px;top:97.1px;width:206.60px;height:19.8px;background:#fff;border:0.6px solid #d9dee3;border-radius:1.5px"></div>
<div class="ab" style="left:152.6px;top:97.1px;width:75.00px;height:19.8px;background:#e9ecef;border:0.6px solid #d9dee3;border-radius:1.5px 0 0 1.5px"></div>
<div class="t" style="left:159.70px;top:101.48px;font-size:9.0px;line-height:12.8px;color:#495057;transform:scaleX(0.8771)">Başlangıç Tarihi *</div>
<div class="t" style="left:234.60px;top:101.68px;font-size:9.0px;line-height:12.8px;color:#495057;transform:scaleX(0.8587);letter-spacing:0.15px">14.12.2021</div>
<svg style="left:343.8px;top:103.4px" width="7.4" height="7.6" viewBox="0 0 7.4 7.6"><rect x="0.55" y="1.1" width="6.3" height="6" rx="0.8" fill="none" stroke="#111" stroke-width="1.1"/><rect x="0.5" y="1" width="6.4" height="1.8" fill="#111"/><path d="M2 0 V1.5 M5.4 0 V1.5" stroke="#111" stroke-width="1"/></svg>
<div class="ab" style="left:367.3px;top:97.1px;width:207.30px;height:19.8px;background:#fff;border:0.6px solid #d9dee3;border-radius:1.5px"></div>
<div class="ab" style="left:367.3px;top:97.1px;width:56.60px;height:19.8px;background:#e9ecef;border:0.6px solid #d9dee3;border-radius:1.5px 0 0 1.5px"></div>
<div class="t" style="left:374.40px;top:101.48px;font-size:9.0px;line-height:12.8px;color:#495057;transform:scaleX(0.8637)">Bitiş Tarihi *</div>
<div class="t" style="left:431.50px;top:101.68px;font-size:9.0px;line-height:12.8px;color:#495057;transform:scaleX(0.8587);letter-spacing:0.15px">14.12.2022</div>
<svg style="left:558.6px;top:103.4px" width="7.4" height="7.6" viewBox="0 0 7.4 7.6"><rect x="0.55" y="1.1" width="6.3" height="6" rx="0.8" fill="none" stroke="#111" stroke-width="1.1"/><rect x="0.5" y="1" width="6.4" height="1.8" fill="#111"/><path d="M2 0 V1.5 M5.4 0 V1.5" stroke="#111" stroke-width="1"/></svg>
<div class="ab" style="left:583.2px;top:97.1px;width:206.30px;height:19.8px;background:#fff;border:0.6px solid #d9dee3;border-radius:1.5px"></div>
<div class="ab" style="left:583.2px;top:97.1px;width:33.90px;height:19.8px;background:#e9ecef;border:0.6px solid #d9dee3;border-radius:1.5px 0 0 1.5px"></div>
<div class="t" style="left:590.30px;top:101.48px;font-size:9.0px;line-height:12.8px;color:#495057;transform:scaleX(0.8741)">Plaka</div>
<div class="t" style="left:624.80px;top:101.68px;font-size:9.0px;line-height:12.8px;color:#495057;transform:scaleX(1.0307)">-</div>
<svg style="left:782px;top:105.5px" width="5.2" height="3.5" viewBox="0 0 5.2 3.5"><path d="M0.6 0.6 L2.6 2.6 L4.6 0.6" fill="none" stroke="#343a40" stroke-width="1.2"/></svg>
<div class="ab" style="left:798.1px;top:96.9px;width:207.2px;height:19.9px;background:#007bff;border-radius:1.8px"></div>
<svg style="left:882.8px;top:103.3px" width="8" height="8" viewBox="0 0 8 8"><circle cx="3.3" cy="3.3" r="2.5" fill="none" stroke="#fff" stroke-width="1.4"/><path d="M5.2 5.2 L7.4 7.4" stroke="#fff" stroke-width="1.6" stroke-linecap="round"/></svg>
<div class="t" style="left:892.90px;top:101.28px;font-size:9.0px;line-height:12.8px;color:#fff;transform:scaleX(0.8828)">Sorgula</div>
</div></body></html>
